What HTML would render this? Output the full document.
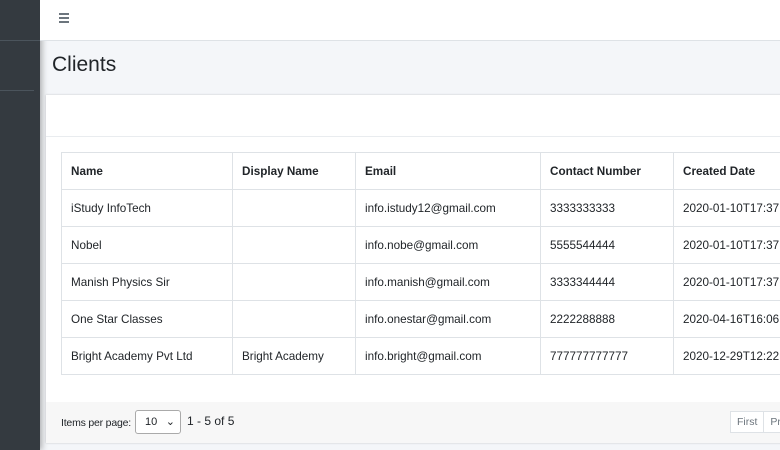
<!DOCTYPE html><html><head><style>
body{margin:0;width:780px;height:450px;overflow:hidden;background:#f4f6f9;font-family:"Liberation Sans",sans-serif;position:relative;color:#212529}
.sb{position:absolute;left:0;top:0;width:40px;height:450px;background:#343a40;box-shadow:2px 0 6px rgba(0,0,0,.3)}
.sb .l1{position:absolute;top:40px;left:0;width:40px;border-top:1px solid #4b545c}
.sb .l2{position:absolute;top:90px;left:0;width:34px;border-top:1px solid #4b545c}
.hd{position:absolute;left:40px;top:0;width:740px;height:40px;background:#fff;border-bottom:1px solid #dee2e6}
.hm{position:absolute;left:59px;top:13px;width:10px}
.hm i{display:block;height:2px;background:#6c757d;margin-bottom:2px}
h1{position:absolute;left:52px;top:53px;margin:0;font-size:21px;font-weight:400;color:#212529}
.card{position:absolute;left:46px;top:95px;width:740px;height:348px;background:#fff;box-shadow:0 0 2px rgba(0,0,0,.2)}
.ch{height:41px;border-bottom:1px solid #e9ecef}
table{position:absolute;left:15px;top:57px;border-collapse:collapse;font-size:11.7px;width:760px;table-layout:fixed}
td,th{border:1px solid #dee2e6;padding:0 9px;height:36px;text-align:left;white-space:nowrap;overflow:hidden}
th{font-weight:bold;height:36px}
.ft{position:absolute;left:0;top:307px;width:740px;height:41px;background:#f7f7f7;font-size:10.5px;white-space:nowrap}
.sel{position:absolute;left:89px;top:8px;width:46px;height:24px;border:1px solid #aaa;border-radius:3px;background:#fff;box-sizing:border-box;font-size:11px;padding:5px 0 0 9px}
.pg{position:absolute;left:684px;top:9px;border:1px solid #dee2e6;height:20px;font-size:10.5px;color:#6c757d;background:#fff;white-space:nowrap;display:flex}
.pg span{display:block;padding:4px 6px;border-right:1px solid #dee2e6}
</style></head><body>
<div class="sb"><div class="l1"></div><div class="l2"></div></div>
<div class="hd"></div>
<div class="hm"><i></i><i></i><i></i></div>
<h1>Clients</h1>
<div class="card"><div class="ch"></div>
<table>
<colgroup><col style="width:171px"><col style="width:123px"><col style="width:185px"><col style="width:133px"><col style="width:148px"></colgroup>
<tr><th>Name</th><th>Display Name</th><th>Email</th><th>Contact Number</th><th>Created Date</th></tr>
<tr><td>iStudy InfoTech</td><td></td><td>info.istudy12@gmail.com</td><td>3333333333</td><td>2020-01-10T17:37:1</td></tr>
<tr><td>Nobel</td><td></td><td>info.nobe@gmail.com</td><td>5555544444</td><td>2020-01-10T17:37:1</td></tr>
<tr><td>Manish Physics Sir</td><td></td><td>info.manish@gmail.com</td><td>3333344444</td><td>2020-01-10T17:37:1</td></tr>
<tr><td>One Star Classes</td><td></td><td>info.onestar@gmail.com</td><td>2222288888</td><td>2020-04-16T16:06:2</td></tr>
<tr><td>Bright Academy Pvt Ltd</td><td>Bright Academy</td><td>info.bright@gmail.com</td><td>777777777777</td><td>2020-12-29T12:22:4</td></tr>
</table>
<div class="ft"><span style="position:absolute;left:15px;top:15px;letter-spacing:-0.2px">Items per page:</span>
<div class="sel">10 <span style="position:absolute;right:5px;top:4px">⌄</span></div>
<span style="position:absolute;left:141px;top:12px;font-size:12px">1 - 5 of 5</span>
<div class="pg"><span>First</span><span>Pre</span></div></div>
</div>
</body></html>
